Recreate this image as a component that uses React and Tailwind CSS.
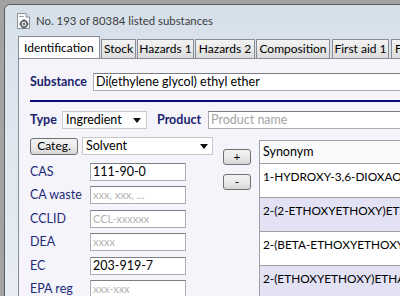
import React from 'react';

const font = { fontFamily: '"Segoe UI", Lato, "Open Sans", sans-serif' };

const Arrow = () => (
    <svg width="8" height="5" viewBox="0 0 8 5" className="shrink-0">
        <path d="M0 0 H8 L4 5 Z" fill="#111" />
    </svg>
);

const TitleIcon = () => (
    <svg width="17" height="18" viewBox="0 0 17 18">
        <path d="M2.5 1.5 H11 L14.5 5 V16.5 H2.5 Z" fill="#fbfbfb" stroke="#8a8f96" />
        <path d="M11 1.5 V5 H14.5" fill="#e4e4e4" stroke="#8a8f96" />
        <rect x="4" y="4" width="5" height="1" fill="#9aa3ad" />
        <circle cx="9" cy="12" r="4.2" fill="#6b6f78" />
        <circle cx="9" cy="12" r="2.2" fill="#e6e8ec" />
        <circle cx="9" cy="12" r="1" fill="#444" />
        <path d="M4.2 12 h1.2 M12.6 12 h1.2 M9 7.2 v1.2 M9 15.6 v1.2" stroke="#555" strokeWidth="1.2" />
    </svg>
);

const tabs = [
    { t: 'Stock', cls: 'w-[35px] ml-[1px]' },
    { t: 'Hazards 1', cls: 'w-[57px] ml-[1px]' },
    { t: 'Hazards 2', cls: 'w-[60px] ml-[1px]' },
    { t: 'Composition', cls: 'w-[74px] ml-[1px]' },
    { t: 'First aid 1', cls: 'w-[57px] ml-[2px]' },
    { t: 'First aid 2', cls: 'w-[60px] ml-[2px]' },
];

const fields = [
    { label: 'CAS', value: '111-90-0' },
    { label: 'CA waste', placeholder: 'xxx, xxx, ...' },
    { label: 'CCLID', placeholder: 'CCL-xxxxxx' },
    { label: 'DEA', placeholder: 'xxxx' },
    { label: 'EC', value: '203-919-7' },
    { label: 'EPA reg', placeholder: 'xxx-xxx' },
];

const synonyms = [
    '1-HYDROXY-3,6-DIOXAOCTANE',
    '2-(2-ETHOXYETHOXY)ETHANOL',
    '2-(BETA-ETHOXYETHOXY)ETHANOL',
    '2-(ETHOXYETHOXY)ETHANOL',
];

const inputCls =
    'h-[18px] bg-white border border-[#abadb3] border-t-[#7c7f86] px-[2px] leading-[16px] outline-none whitespace-nowrap overflow-hidden';

const winBtn =
    'flex items-center justify-center rounded-[3px] border border-[#707070] bg-gradient-to-b from-[#f2f2f2] via-[#ebebeb] to-[#d6d6d6] text-[12px] text-black';

export default function App() {
    return (
        <div className="w-[400px] h-[296px] overflow-hidden bg-[#a3a3a3] pl-[4px] pt-[4px]" style={font}>
            <div className="w-[520px] h-[320px] rounded-tl-[6px] border border-[#595d63] bg-gradient-to-b from-[#d6e0ea] via-[#e2e8f0] to-[#e9eef4] overflow-hidden">
                {/* title bar */}
                <div className="h-[31px] flex items-center pl-[10px] gap-[4px]">
                    <TitleIcon />
                    <span className="text-[11.4px] text-[#3c3c3c]">No. 193 of 80384 listed substances</span>
                </div>

                {/* tabs */}
                <div className="ml-[13px] h-[22px] flex items-end">
                    <div className="w-[82px] h-[22px] bg-white border border-[#898c95] border-b-0 pl-[5px] pt-[2px] text-[12px] text-black">
                        Identification
                    </div>
                    {tabs.map(({ t, cls }) => (
                        <div
                            key={t}
                            className={`${cls} shrink-0 h-[19px] border border-[#898c95] border-b-0 bg-gradient-to-b from-[#f3f3f3] to-[#dcdcdc] text-[12px] text-black text-center leading-[17px] whitespace-nowrap`}
                        >
                            {t}
                        </div>
                    ))}
                </div>

                {/* panel */}
                <div className="ml-[13px] h-[260px] bg-[#f4f4fa] border-t border-l border-[#898c95] pl-[11px] pt-[14px]">
                    <div className="flex items-center h-[18px]">
                        <span className="w-[63px] shrink-0 text-[12.5px] font-bold text-[#1b1f6e]">Substance</span>
                        <div className={`${inputCls} w-[380px] text-[12.5px] text-black`}>Di(ethylene glycol) ethyl ether</div>
                    </div>

                    <div className="mt-[9px] h-[2px] bg-[#0a0a78]" />

                    <div className="mt-[9px] flex items-center h-[18px]">
                        <span className="w-[32px] shrink-0 text-[12.5px] font-bold text-[#1b1f6e]">Type</span>
                        <div className="w-[85px] shrink-0 h-[18px] bg-white border border-[#c8c8c8] flex items-center justify-between pl-[3px] pr-[5px] text-[12.5px] text-black">
                            <span>Ingredient</span>
                            <Arrow />
                        </div>
                        <span className="ml-[10px] w-[51px] shrink-0 text-[12.5px] font-bold text-[#1b1f6e]">Product</span>
                        <div className={`${inputCls} w-[260px] text-[12.5px] text-[#a4a4a4]`}>Product name</div>
                    </div>

                    <div className="mt-[8px] flex">
                        {/* left column */}
                        <div className="w-[183px] shrink-0">
                            <div className="flex items-center h-[18px]">
                                <div className={`${winBtn} w-[48px] h-[17px] shrink-0`}>Categ.</div>
                                <div className="ml-[4px] w-[131px] h-[18px] bg-white border border-[#c8c8c8] flex items-center justify-between pl-[3px] pr-[4px] text-[12.5px] text-black">
                                    <span>Solvent</span>
                                    <Arrow />
                                </div>
                            </div>
                            <div className="mt-[8px] grid grid-rows-[repeat(6,23.4px)]">
                                {fields.map((f) => (
                                    <div key={f.label} className="flex items-start">
                                        <span className="w-[60px] shrink-0 text-[12.5px] leading-[18px] text-[#1f2a78]">{f.label}</span>
                                        {f.value ? (
                                            <div className={`${inputCls} w-[96px] text-[12.5px] text-black`}>{f.value}</div>
                                        ) : (
                                            <div className={`${inputCls} w-[96px] text-[11px] text-[#b4b4b4]`}>{f.placeholder}</div>
                                        )}
                                    </div>
                                ))}
                            </div>
                        </div>

                        {/* +/- buttons */}
                        <div className="ml-[10px] pt-[12px] flex flex-col gap-[9px] shrink-0">
                            <div className={`${winBtn} w-[28px] h-[16px] leading-none`}>+</div>
                            <div className={`${winBtn} w-[28px] h-[16px] leading-none`}>-</div>
                        </div>

                        {/* synonym table */}
                        <div className="ml-[8px] mt-[3px] w-[220px] shrink-0 border-l border-t border-[#a0a0a0] bg-white">
                            <div className="h-[23px] border-b border-[#a0a0a0] bg-[#fafafa] pl-[3px] text-[12.5px] leading-[22px] text-black">
                                Synonym
                            </div>
                            {synonyms.map((s, i) => (
                                <div
                                    key={s}
                                    className={`h-[34px] border-b border-[#a0a0a0] pl-[3px] pt-[4px] text-[11.8px] whitespace-nowrap overflow-hidden text-black ${i % 2 ? 'bg-[#e2e2f4]' : 'bg-white'}`}
                                >
                                    {s}
                                </div>
                            ))}
                        </div>
                    </div>
                </div>
            </div>
        </div>
    );
}
